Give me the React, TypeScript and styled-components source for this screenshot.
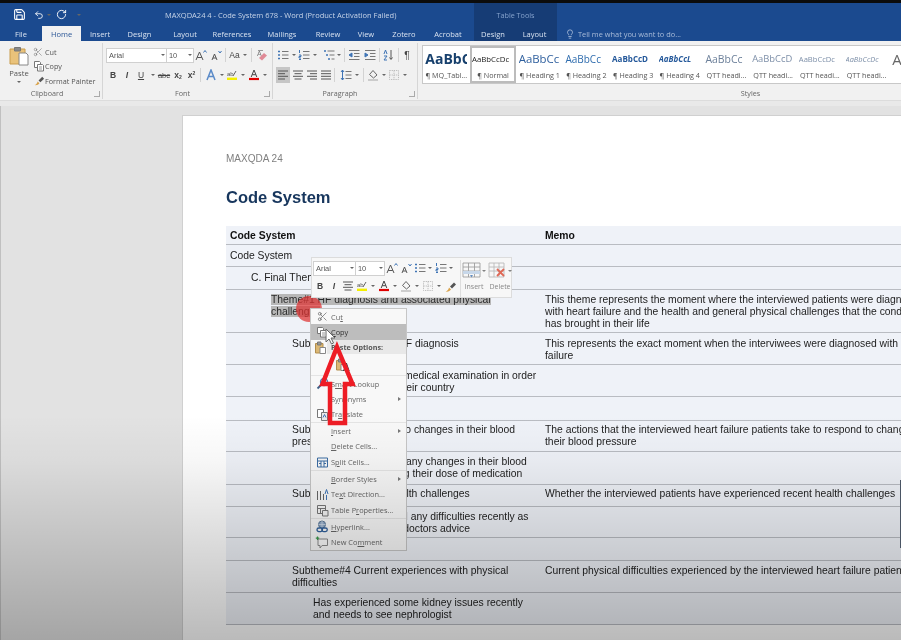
import React from "react";
import styled, { createGlobalStyle } from "styled-components";
import { Save, Undo2, RotateCw, Lightbulb, Scissors } from "lucide-react";

const Global = createGlobalStyle`
  html, body { margin: 0; padding: 0; background: #e2e2e2; }
  body { font-family: "Open Sans", "Liberation Sans", sans-serif; }
  svg { display: block; }
`;

const Screen = styled.div`
  position: relative; width: 901px; height: 640px; overflow: hidden;
  display: flex; flex-direction: column; background: #e2e2e2;
  filter: blur(0.3px);
`;
const TopEdge = styled.div`height: 3px; flex: none; background: #0c0c0c;`;

const Header = styled.header`
  flex: none; display: grid; grid-template-columns: 474px 83px 1fr; grid-template-rows: 23px 15px;
  background: #1b4a8f; color: #fff;
`;
const TitleCell = styled.div`display: flex; align-items: center; position: relative; padding-left: 13px;`;
const Qat = styled.div`display: flex; align-items: center; color: #fff; width: 152px; flex: none;`;
const QatSlot = styled.span<{ $w: number }>`width: ${p => p.$w}px; flex: none; display: flex; justify-content: flex-start; align-items: center;`;
const DocTitle = styled.div`font-size: 7.5px; color: #c7d4e8; white-space: nowrap;`;
const ContextTitle = styled.div`
  background: #163c75; color: #86a3cd; font-size: 7.2px; display: flex; align-items: center; justify-content: center;
`;
const Tabs = styled.nav`display: flex; align-items: stretch;`;
const Tab = styled.span<{ $w: number; $active?: boolean }>`
  width: ${p => p.$w}px; flex: none; display: flex; align-items: center; justify-content: center;
  font-size: 7.5px; white-space: nowrap;
  color: ${p => (p.$active ? "#2b5797" : "#d8e2f0")};
  background: ${p => (p.$active ? "#f1f1f1" : "transparent")};
`;
const ContextTabs = styled(Tabs)`background: #163c75;`;
const TellMe = styled.div`display: flex; align-items: center; gap: 3px; padding-left: 8px; font-size: 7.4px; color: #a9bcd9;`;

const Ribbon = styled.div`
  flex: none; height: 59px; display: flex; background: #f1f1f1; color: #555;
`;
const RibbonFoot = styled.div`flex: none; height: 5px; background: #e9e9e9; border-top: 1px solid #dcdcdc;`;
const Group = styled.section<{ $w?: number; $last?: boolean }>`
  position: relative; flex: ${p => (p.$w ? `none` : 1)}; ${p => (p.$w ? `width: ${p.$w}px;` : "min-width: 0;")}
  display: flex; flex-direction: column; border-right: ${p => (p.$last ? "0" : "1px solid #d6d6d6")}; box-sizing: border-box;
  margin-top: 2px; margin-bottom: 1px;
`;
const GroupBody = styled.div`flex: 1; min-height: 0;`;
const ClipBody = styled(GroupBody)`display: flex; padding: 2px 0 0 6px;`;
const ToolBody = styled(GroupBody)<{ $l: number }>`display: flex; flex-direction: column; gap: 4px; padding: 4px 0 0 ${p => p.$l}px;`;
const GroupLabel = styled.div<{ $pl?: number; $pr?: number }>`
  height: 12px; flex: none; display: flex; align-items: center; justify-content: center; font-size: 7.2px; color: #666;
  padding: 0 ${p => p.$pr ?? 0}px 0 ${p => p.$pl ?? 0}px;
`;
const Launcher = styled.span`position: absolute; right: 2px; bottom: 2px; width: 5px; height: 5px; border-left: 1px solid #aaa; border-bottom: 1px solid #aaa; transform: scaleX(-1);`;
const PasteCol = styled.div`width: 26px; flex: none; display: flex; flex-direction: column; align-items: center; font-size: 7.6px; color: #555;`;
const PasteLabel = styled.span`margin-top: 2px; line-height: 10px;`;
const PasteCaret = styled.span`
  height: 8px; display: flex; align-items: center;
  &::after { content: ""; border-left: 2px solid transparent; border-right: 2px solid transparent; border-top: 2px solid #666; }
`;
const ClipList = styled.div`display: flex; flex-direction: column; gap: 2px; margin-left: 1px; padding-top: 1px;`;
const ClipItem = styled.div`height: 13px; display: flex; align-items: center; font-size: 7.25px; color: #555; white-space: nowrap;`;
const ClipGlyph = styled.span`width: 12px; flex: none; display: flex; align-items: center;`;
const Row = styled.div`display: flex; align-items: center; height: 16px;`;
const Tool = styled.span<{ $w?: number; $on?: boolean; $b?: boolean; $i?: boolean; $u?: boolean; $fs?: number; $ml?: number }>`
  width: ${p => p.$w ?? 14}px; height: 16px; flex: none; display: flex; align-items: center; justify-content: center;
  font-family: "Liberation Sans", sans-serif; font-size: ${p => p.$fs ?? 8.5}px; color: #444;
  font-weight: ${p => (p.$b ? 700 : 400)}; font-style: ${p => (p.$i ? "italic" : "normal")};
  text-decoration: ${p => (p.$u ? "underline" : "none")};
  background: ${p => (p.$on ? "#c6c6c6" : "transparent")};
  margin-left: ${p => p.$ml ?? 0}px;
`;
const Script = styled.span<{ $up?: boolean }>`font-size: 5px; align-self: ${p => (p.$up ? "flex-start" : "flex-end")}; margin: 3px 0;`;
const Caret = styled.span<{ $w?: number; $h?: number }>`
  width: ${p => p.$w ?? 7}px; height: ${p => p.$h ?? 16}px; flex: none; display: flex; align-items: center; justify-content: center;
  &::after { content: ""; border-left: 2px solid transparent; border-right: 2px solid transparent; border-top: 2px solid #666; }
`;
const Sep = styled.span<{ $l?: number; $r?: number }>`
  width: 1px; height: 14px; flex: none; background: #d3d3d3; margin: 0 ${p => p.$r ?? 2}px 0 ${p => p.$l ?? 2}px;
`;
const Field = styled.span<{ $w: number }>`
  width: ${p => p.$w}px; height: 15px; box-sizing: border-box; flex: none; display: flex; align-items: center; justify-content: space-between;
  background: #fff; border: 1px solid #d0d0d0; margin-right: -1px; padding-left: 2px;
  font-family: "Liberation Sans", sans-serif; font-size: 7.4px; color: #555;
`;
const Gallery = styled.div`
  margin: 2px 0 0 4px; height: 39px; display: flex; background: #fff; overflow: hidden;
  border-top: 1px solid #c8c8c8; border-bottom: 1px solid #c8c8c8; border-left: 1px solid #c8c8c8; box-sizing: border-box;
`;
const Tile = styled.div<{ $on?: boolean }>`
  width: 46.7px; flex: none; box-sizing: border-box; display: flex; flex-direction: column; align-items: center; overflow: hidden;
  padding-top: ${p => (p.$on ? 3 : 5)}px; border: ${p => (p.$on ? "2px solid #bcbcbc" : "0")};
`;
const Sample = styled.div<{ $fs: number; $c: string; $b?: boolean; $i?: boolean }>`
  height: 15px; width: 42px; overflow: hidden; white-space: nowrap; display: flex; align-items: center;
  font-family: "Open Sans", sans-serif; font-size: ${p => p.$fs}px; color: ${p => p.$c};
  font-weight: ${p => (p.$b ? 700 : 400)}; font-style: ${p => (p.$i ? "italic" : "normal")};
`;
const TileName = styled.div`margin-top: 4px; font-size: 7.2px; color: #555; white-space: nowrap; width: 43px; text-align: center;`;

const Workspace = styled.main`flex: 1; min-height: 0; padding: 9px 0 0 181px; border-left: 1px solid #c0c0c0; overflow: hidden;`;
const Page = styled.article`
  width: 900px; height: 560px; box-sizing: border-box; background: #fff; border: 1px solid #d0d0d0; padding: 37px 0 0 43px;
`;
const Running = styled.div`font-family: "Liberation Sans", sans-serif; font-size: 10px; line-height: 12px; color: #808080;`;
const DocHeading = styled.h1`
  margin: 22px 0 0; font-family: "Liberation Sans", sans-serif; font-size: 16.5px; line-height: 20px; font-weight: 700; color: #17365d;
`;
const Table = styled.div`margin-top: 19px; width: 760px; font-family: "Liberation Sans", sans-serif; font-size: 10.35px; line-height: 12px; color: #222;`;
const TRow = styled.div<{ $h: number; $t: number }>`
  display: grid; grid-template-columns: 315px 1fr; height: ${p => p.$h}px; box-sizing: border-box; background: #eff2f8;
  border-bottom: 1px solid #b9bcc2; padding-top: ${p => p.$t}px;
`;
const HeadRow = styled(TRow)`font-weight: 700; color: #111;`;
const CodeCell = styled.div<{ $indent: number }>`padding-left: ${p => 4 + p.$indent}px; white-space: pre-line;`;
const MemoCell = styled.div`padding-left: 4px; white-space: pre-line;`;
const Selected = styled.span`background: #b7b7b7; color: #2a2a2a;`;

const Touch = styled.div`position: absolute; left: 296px; top: 296px; width: 26px; height: 26px; border-radius: 50%; background: rgba(222, 48, 48, 0.72);`;
const MiniBar = styled.div`
  position: absolute; left: 311px; top: 257px; width: 201px; height: 41px; box-sizing: border-box; background: #f7f7f7;
  border: 1px solid #dcdcdc; display: flex; padding: 2px 0 0 1px;
`;
const MiniMain = styled.div`display: flex; flex-direction: column; gap: 2px; width: 147px; flex: none; border-right: 1px solid #dedede;`;
const MiniRow = styled.div`display: flex; align-items: center; height: 16px;`;
const MiniAction = styled.div<{ $w: number }>`
  width: ${p => p.$w}px; flex: none; display: flex; flex-direction: column; align-items: center; font-size: 7px; color: #888; gap: 3px; padding-top: 2px;
`;
const MiniIcon = styled.div`display: flex; align-items: center; height: 17px; opacity: 0.8;`;

const Menu = styled.div`
  position: absolute; left: 310px; top: 308px; width: 97px; height: 243px; box-sizing: border-box; background: #f8f8f8;
  border: 1px solid #c6c6c6; display: flex; flex-direction: column;
`;
const MenuItem = styled.div<{ $h?: number; $on?: boolean; $sep?: boolean }>`
  height: ${p => p.$h ?? 16}px; flex: none; box-sizing: border-box; display: grid; grid-template-columns: 20px 1fr 8px; align-items: center;
  font-size: 7.4px; color: ${p => (p.$on ? "#333" : "#666")}; white-space: nowrap;
  background: ${p => (p.$on ? "#bdbdbd" : "transparent")};
  ${p => (p.$sep ? "border-top: 1px solid #e4e4e4;" : "")}
`;
const MenuHead = styled.div`
  height: 14px; flex: none; display: grid; grid-template-columns: 16px 1fr; align-items: center;
  font-size: 7.2px; font-weight: 700; color: #555;
`;
const MenuHeadText = styled.span`height: 100%; display: flex; align-items: center; padding-left: 4px; background: #e8e8e8;`;
const MenuGlyph = styled.span`display: flex; justify-content: center; padding-left: 2px;`;
const Sub = styled.span`
  width: 0; height: 0; border-left: 3px solid #777; border-top: 2px solid transparent; border-bottom: 2px solid transparent;
`;
const PasteRow = styled.div`height: 21px; flex: none; padding-left: 24px; display: flex; align-items: center; gap: 0;`;
const PasteA = styled.span`font-family: "Liberation Sans", sans-serif; font-size: 10px; color: #333; margin: 6px 0 0 -5px;`;
const Pointer = styled.svg`position: absolute; left: 325px; top: 328px;`;
const Arrow = styled.svg`position: absolute; left: 315px; top: 340px;`;
const Shade = styled.div`
  position: absolute; left: 0; right: 0; top: 415px; bottom: 0; pointer-events: none;
  background: linear-gradient(to bottom, rgba(0,0,0,0) 0%, rgba(0,0,0,0.03) 20%, rgba(0,0,0,0.27) 100%);
`;
const ScrollThumb = styled.div`position: absolute; right: 0; top: 480px; width: 1px; height: 68px; background: #4a5564;`;

const P = (p: { s?: number; children: React.ReactNode; w?: number; h?: number }) => (
  <svg width={p.w ?? p.s ?? 12} height={p.h ?? p.s ?? 12} viewBox={`0 0 ${p.w ?? p.s ?? 12} ${p.h ?? p.s ?? 12}`} fill="none" stroke="#777" strokeWidth="1">
    {p.children}
  </svg>
);

const Bullets = () => (
  <P>
    <path d="M1 2.500h2M1 6h2M1 9.500h2" stroke="#3f74b5" strokeWidth="1.600" />
    <path d="M5 2.500h6.500M5 6h6.500M5 9.500h6.500" />
  </P>
);
const Numbers = () => (
  <P>
    <path d="M1.500 1v3M1 6h2v1.500H1V9h2M1 10.500h2" stroke="#3f74b5" />
    <path d="M5 2.500h6.500M5 6h6.500M5 9.500h6.500" />
  </P>
);
const MultiList = () => (
  <P>
    <path d="M1 2h2M3 6h2M5 10h2" stroke="#3f74b5" strokeWidth="1.400" />
    <path d="M4.500 2h7M6.500 6h5M8.500 10h3" />
  </P>
);
const Indent = ({ right }: { right?: boolean }) => (
  <P>
    <path d="M1 1.500h10.500M6 4.500h5.500M6 7.500h5.500M1 10.500h10.500" />
    <path d={right ? "M1 4l3 2-3 2z" : "M4 4L1 6l3 2z"} fill="#3f74b5" stroke="#3f74b5" />
  </P>
);
const Sort = () => (
  <P>
    <path d="M9 1v9M7.500 8.500L9 10.500l1.500-2" stroke="#555" />
    <path d="M2 5l1.500-4L5 5M2 7h3L2 11h3" stroke="#3f74b5" />
  </P>
);
const Align = ({ kind }: { kind: "l" | "c" | "r" | "j" }) => {
  const d = {
    l: "M1 2h10M1 4.700h7M1 7.300h10M1 10h7",
    c: "M1 2h10M2.500 4.700h7M1 7.300h10M2.500 10h7",
    r: "M1 2h10M4 4.700h7M1 7.300h10M4 10h7",
    j: "M1 2h10M1 4.700h10M1 7.300h10M1 10h10",
  }[kind];
  return <P><path d={d} stroke="#555" /></P>;
};
const Spacing = () => (
  <P>
    <path d="M2.500 1v10M1 3l1.500-2L4 3M1 9l1.500 2L4 9" stroke="#3f74b5" />
    <path d="M5.500 2.500h6M5.500 6h6M5.500 9.500h6" />
  </P>
);
const Bucket = () => (
  <P>
    <path d="M6 1.500L10 6l-3.500 3L2.500 5.500z" stroke="#666" />
    <path d="M1 11h10" stroke="#bbb" strokeWidth="1.400" />
  </P>
);
const Borders = () => (
  <P>
    <path d="M1.500 1.500h9v9h-9zM6 1.500v9M1.500 6h9" stroke="#bbb" strokeDasharray="1.200 1" />
  </P>
);
const Highlight = () => (
  <svg width="12" height="12" viewBox="0 0 12 12" fill="none">
    <text x="1" y="6.500" fontSize="6" fontFamily="Liberation Sans" fill="#555">ab</text>
    <path d="M7 7l3-5" stroke="#666" />
    <path d="M1 9.800h10" stroke="#f5f000" strokeWidth="2.400" />
  </svg>
);
const FontColor = () => (
  <svg width="12" height="12" viewBox="0 0 12 12" fill="none">
    <path d="M3.200 8L6 1l2.800 7M4.200 5.700h3.600" stroke="#444" strokeWidth="1" />
    <path d="M1 10h10" stroke="#e00000" strokeWidth="2.200" />
  </svg>
);
const TextFx = () => (
  <svg width="12" height="12" viewBox="0 0 12 12" fill="none">
    <path d="M2 11L6 1l4 10M3.500 7.500h5" stroke="#5a8ac8" strokeWidth="1.500" />
  </svg>
);
const Grow = ({ up }: { up?: boolean }) => (
  <svg width="12" height="12" viewBox="0 0 12 12" fill="none">
    <path d={up ? "M1 11L4.500 3 8 11M2.200 8.500h4.600" : "M2 11L4.500 5 7 11M3 9h3"} stroke="#555" strokeWidth="1" />
    <path d={up ? "M8.500 3.500L10 1.500l1.500 2" : "M8.500 2l1.500 2 1.500-2"} stroke="#3f74b5" strokeWidth="1" />
  </svg>
);
const EraserIcon = () => (
  <svg width="13" height="13" viewBox="0 0 13 13" fill="none">
    <path d="M3 1.500h5" stroke="#999" />
    <text x="2" y="7" fontSize="7" fontFamily="Liberation Sans" fill="#777">A</text>
    <path d="M4 9l5-5 3 2.500-5 5z" fill="#e08a96" />
  </svg>
);
const Painter = () => (
  <svg width="13" height="13" viewBox="0 0 13 13" fill="none">
    <path d="M1.500 11.500c2-.5 3-2 3.500-4l2 2c-1 1.500-3 2.500-5.500 2z" fill="#d9a24a" />
    <path d="M6 6.500l4-4 2 2-4 4z" fill="#555" />
  </svg>
);
const PasteBig = () => (
  <svg width="20" height="21" viewBox="0 0 20 21" fill="none">
    <path d="M1 4h15v15H1z" fill="#e9c27a" stroke="#c99c4c" />
    <path d="M5.500 2.500h6V6h-6z" fill="#8a8a8a" stroke="#777" />
    <path d="M10 8h7l2 2v10h-9z" fill="#fff" stroke="#888" />
  </svg>
);
const CopyIcon = () => (
  <P>
    <path d="M1.500 1.500h5l1 1v5h-6z" fill="#fff" />
    <path d="M4.500 4.500h5l1 1v5.500h-6z" fill="#fff" />
    <path d="M6 7h3M6 9h3" stroke="#999" />
  </P>
);
const ClipIcon = () => (
  <P s={13}>
    <path d="M1.500 2.500h7.500v9.500H1.500z" fill="#dcb874" stroke="#b28d4b" />
    <path d="M3.500 1h3.500v3H3.500z" fill="#999" stroke="#777" />
    <path d="M6 6.500h5.500V12.500H6z" fill="#fff" stroke="#888" />
  </P>
);
const SearchIcon = () => (
  <P s={13}>
    <circle cx="8" cy="5" r="3.500" stroke="#4a7fb8" strokeWidth="1.300" />
    <path d="M5.500 7.500L1.500 11.500" stroke="#3c5f87" strokeWidth="1.800" />
  </P>
);
const TranslateIcon = () => (
  <P s={13}>
    <path d="M1.500 1.500h6v8h-6z" fill="#fff" />
    <path d="M5.500 4.500h6v8h-6z" fill="#e9e9e9" />
    <path d="M7 9.500l1.500-3 1.500 3" stroke="#3f74b5" />
  </P>
);
const SplitIcon = () => (
  <P s={13}>
    <path d="M1.500 2h10v9h-10zM1.500 5h10M5 5v6M8 5v6" stroke="#3b6ca3" />
    <path d="M3 7.500h2M8 7.500h2" stroke="#3b6ca3" />
  </P>
);
const DirectionIcon = () => (
  <svg width="13" height="13" viewBox="0 0 13 13" fill="none">
    <path d="M1.500 3v9M4.500 3v9M7.500 6v6" stroke="#666" />
    <path d="M9 6l1.500-4.500L12 6" stroke="#3f74b5" />
    <path d="M10.500 7v5" stroke="#3f74b5" />
  </svg>
);
const PropsIcon = () => (
  <P s={13}>
    <path d="M1.500 1.500h8v8h-8zM1.500 4.500h8M4.500 4.500v5" />
    <path d="M6.500 6.500h5.500v5.500H6.500z" fill="#f4f4f4" />
  </P>
);
const LinkIcon = () => (
  <svg width="13" height="13" viewBox="0 0 13 13" fill="none">
    <circle cx="6" cy="4.500" r="3.500" fill="#8fa9c7" stroke="#5b7796" />
    <path d="M2.500 4.500h7M6 1v7" stroke="#d5e0ec" strokeWidth=".7" />
    <rect x="1" y="8" width="5.500" height="3.600" rx="1.800" stroke="#2f5f9a" strokeWidth="1.300" />
    <rect x="5.800" y="8" width="5.500" height="3.600" rx="1.800" stroke="#2f5f9a" strokeWidth="1.300" />
  </svg>
);
const CommentIcon = () => (
  <svg width="14" height="13" viewBox="0 0 14 13" fill="none">
    <path d="M3 3h9.500v6.500H7l-2 2.500V9.500H3z" fill="#fbfbfb" stroke="#8a8a8a" />
    <path d="M2.500 .5v3.500M.8 2.200h3.400" stroke="#3c9a4c" strokeWidth="1.200" />
  </svg>
);
const InsertTable = () => (
  <svg width="20" height="17" viewBox="0 0 20 17" fill="none">
    <path d="M1 1h17v14H1zM1 5h17M1 9h17M6.500 1v14M12.500 1v14" stroke="#888" strokeWidth=".9" />
    <path d="M1 9h17v3H1z" fill="#bcd0e6" />
    <path d="M8 13l1.500 2.500L11 13z" fill="#3f74b5" />
  </svg>
);
const DeleteTable = () => (
  <svg width="20" height="17" viewBox="0 0 20 17" fill="none">
    <path d="M1 1h15v14H1zM1 5h15M1 9h15M6 1v14M11 1v14" stroke="#aaa" strokeWidth=".9" />
    <path d="M9 7l7 7M16 7l-7 7" stroke="#d9462f" strokeWidth="1.800" />
  </svg>
);

const styles: { t: string; n: string; fs: number; c: string; b?: boolean; i?: boolean; on?: boolean }[] = [
  { t: "AaBbC", n: "¶ MQ_Tabl...", fs: 14, c: "#17406d", b: true },
  { t: "AaBbCcDc", n: "¶ Normal", fs: 7.8, c: "#222", on: true },
  { t: "AaBbCc", n: "¶ Heading 1", fs: 11.4, c: "#2e5f9e" },
  { t: "AaBbCc", n: "¶ Heading 2", fs: 10, c: "#2e6cae" },
  { t: "AaBbCcD", n: "¶ Heading 3", fs: 8, c: "#24589a", b: true },
  { t: "AaBbCcL", n: "¶ Heading 4", fs: 8, c: "#24589a", b: true, i: true },
  { t: "AaBbCc", n: "QTT headi...", fs: 10.4, c: "#6b7f99" },
  { t: "AaBbCcD", n: "QTT headi...", fs: 9.4, c: "#7d8fa8" },
  { t: "AaBbCcDc", n: "QTT headi...", fs: 7.6, c: "#7d8fa8" },
  { t: "AaBbCcDc", n: "QTT headi...", fs: 7.4, c: "#7d8fa8", i: true },
  { t: "A", n: "", fs: 15, c: "#666" },
];

type R = { h: number; t: number; indent?: number; code?: React.ReactNode; memo?: string };
const rows: R[] = [
  { h: 22, t: 5, indent: 0, code: "Code System" },
  { h: 23, t: 5, indent: 21, code: "C. Final Themes" },
  {
    h: 43, t: 4, indent: 41,
    code: <><Selected>Theme#1 HF diagnosis and associated physical</Selected>{"\n"}<Selected>challenges</Selected></>,
    memo: "This theme represents the moment where the interviewed patients were diagnosed\nwith heart failure and the health and general physical challenges that the condition\nhas brought in their life",
  },
  { h: 32, t: 5, indent: 62, code: "Subtheme#1 Getting a HF diagnosis", memo: "This represents the exact moment when the interviwees were diagnosed with heart\nfailure" },
  { h: 32, t: 5, indent: 83, code: "Was taken for a full medical examination in order\nto be examined in their country" },
  { h: 24, t: 4 },
  { h: 31, t: 3, indent: 62, code: "Subtheme#2 Reactions to changes in their blood\npressure", memo: "The actions that the interviewed heart failure patients take to respond to changes in\ntheir blood pressure" },
  { h: 33, t: 4, indent: 83, code: "Has not undergone\u2009 any changes in their blood\npressure, decreasing their dose of medication" },
  { h: 22, t: 3, indent: 62, code: "Subtheme#3 Recent health challenges", memo: "Whether the interviewed patients have experienced recent health challenges" },
  { h: 31, t: 4, indent: 83, code: "Has not experienced any difficulties recently as\nsince they followed doctors advice" },
  { h: 23, t: 4 },
  { h: 32, t: 4, indent: 62, code: "Subtheme#4 Current experiences with physical\ndifficulties", memo: "Current physical difficulties experienced by the interviewed heart failure patients" },
  { h: 32, t: 4, indent: 83, code: "Has experienced some kidney issues recently\nand needs to see nephrologist" },
];

export default function App() {
  return (
    <Screen>
      <Global />
      <TopEdge />
      <Header>
        <TitleCell>
          <Qat>
            <QatSlot $w={21}><Save size={13} strokeWidth={2} /></QatSlot>
            <QatSlot $w={10}><Undo2 size={12} strokeWidth={2} /></QatSlot>
            <Caret $w={9} />
            <QatSlot $w={3} />
            <QatSlot $w={20}><RotateCw size={11} strokeWidth={2} /></QatSlot>
            <Caret $w={6} />
          </Qat>
          <DocTitle>MAXQDA24 4 - Code System 678 - Word (Product Activation Failed)</DocTitle>
        </TitleCell>
        <ContextTitle>Table Tools</ContextTitle>
        <div />
        <Tabs>
          <Tab $w={42}>File</Tab>
          <Tab $w={39} $active>Home</Tab>
          <Tab $w={38}>Insert</Tab>
          <Tab $w={41}>Design</Tab>
          <Tab $w={50}>Layout</Tab>
          <Tab $w={44}>References</Tab>
          <Tab $w={56}>Mailings</Tab>
          <Tab $w={36}>Review</Tab>
          <Tab $w={40}>View</Tab>
          <Tab $w={36}>Zotero</Tab>
          <Tab $w={52}>Acrobat</Tab>
        </Tabs>
        <ContextTabs>
          <Tab $w={38}>Design</Tab>
          <Tab $w={45}>Layout</Tab>
        </ContextTabs>
        <TellMe>
          <Lightbulb size={10} strokeWidth={1.5} color="#d8e2f0" />
          Tell me what you want to do...
        </TellMe>
      </Header>
      <Ribbon>
        <Group $w={103}>
          <ClipBody>
            <PasteCol>
              <PasteBig />
              <PasteLabel>Paste</PasteLabel>
              <PasteCaret />
            </PasteCol>
            <ClipList>
              <ClipItem><ClipGlyph><Scissors size={10} color="#666" strokeWidth={1.2} /></ClipGlyph>Cut</ClipItem>
              <ClipItem><ClipGlyph><CopyIcon /></ClipGlyph>Copy</ClipItem>
              <ClipItem><ClipGlyph><Painter /></ClipGlyph>Format Painter</ClipItem>
            </ClipList>
          </ClipBody>
          <GroupLabel $pr={8}>Clipboard</GroupLabel>
          <Launcher />
        </Group>
        <Group $w={170}>
          <ToolBody $l={3}>
            <Row>
              <Field $w={61}>Arial<Caret /></Field>
              <Field $w={28}>10<Caret /></Field>
              <Tool $w={15}><Grow up /></Tool>
              <Tool $w={15}><Grow /></Tool>
              <Sep $l={2} $r={2} />
              <Tool $w={13} $fs={8.5}>Aa</Tool>
              <Caret />
              <Sep $l={3} $r={2} />
              <Tool $w={14}><EraserIcon /></Tool>
            </Row>
            <Row>
              <Tool $b>B</Tool>
              <Tool $i $b>I</Tool>
              <Tool $u>U</Tool>
              <Caret $w={9} />
              <Tool $fs={7.6}><s>abc</s></Tool>
              <Tool $b>x<Script>2</Script></Tool>
              <Tool $w={13} $b>x<Script $up>2</Script></Tool>
              <Sep $l={2} $r={3} />
              <Tool><TextFx /></Tool>
              <Caret $w={7} />
              <Tool><Highlight /></Tool>
              <Caret $w={8} />
              <Tool><FontColor /></Tool>
              <Caret $w={8} />
            </Row>
          </ToolBody>
          <GroupLabel $pr={10}>Font</GroupLabel>
          <Launcher />
        </Group>
        <Group $w={145}>
          <ToolBody $l={3}>
            <Row>
              <Tool><Bullets /></Tool>
              <Caret $w={7} />
              <Tool><Numbers /></Tool>
              <Caret $w={7} />
              <Tool $ml={4}><MultiList /></Tool>
              <Caret $w={6} />
              <Sep $l={2} $r={2} />
              <Tool><Indent /></Tool>
              <Tool $ml={2}><Indent right /></Tool>
              <Sep $l={2} $r={1} />
              <Tool><Sort /></Tool>
              <Sep $l={3} $r={1} />
              <Tool $fs={10}>¶</Tool>
            </Row>
            <Row>
              <Tool $on><Align kind="l" /></Tool>
              <Tool $ml={1}><Align kind="c" /></Tool>
              <Tool><Align kind="r" /></Tool>
              <Tool><Align kind="j" /></Tool>
              <Sep $l={1} $r={4} />
              <Tool><Spacing /></Tool>
              <Caret $w={7} />
              <Sep $l={3} $r={2} />
              <Tool><Bucket /></Tool>
              <Caret $w={7} />
              <Tool><Borders /></Tool>
              <Caret $w={8} />
            </Row>
          </ToolBody>
          <GroupLabel $pr={10}>Paragraph</GroupLabel>
          <Launcher />
        </Group>
        <Group $last>
          <GroupBody>
            <Gallery>
              {styles.map((s, i) => (
                <Tile key={i} $on={s.on}>
                  <Sample $fs={s.fs} $c={s.c} $b={s.b} $i={s.i}>{s.t}</Sample>
                  <TileName>{s.n}</TileName>
                </Tile>
              ))}
            </Gallery>
          </GroupBody>
          <GroupLabel $pl={182}>Styles</GroupLabel>
        </Group>
      </Ribbon>
      <RibbonFoot />
      <Workspace>
        <Page>
          <Running>MAXQDA 24</Running>
          <DocHeading>Code System</DocHeading>
          <Table>
            <HeadRow $h={19} $t={4}>
              <CodeCell $indent={0}>Code System</CodeCell>
              <MemoCell>Memo</MemoCell>
            </HeadRow>
            {rows.map((r, i) => (
              <TRow key={i} $h={r.h} $t={r.t}>
                <CodeCell $indent={r.indent ?? 0}>{r.code}</CodeCell>
                <MemoCell>{r.memo}</MemoCell>
              </TRow>
            ))}
          </Table>
        </Page>
      </Workspace>
      <Touch />
      <MiniBar>
        <MiniMain>
          <MiniRow>
            <Field $w={43}>Arial<Caret /></Field>
            <Field $w={30}>10<Caret /></Field>
            <Tool $w={15}><Grow up /></Tool>
            <Tool $w={14}><Grow /></Tool>
            <Tool $w={13}><Bullets /></Tool>
            <Caret $w={8} />
            <Tool $w={13}><Numbers /></Tool>
            <Caret $w={7} />
          </MiniRow>
          <MiniRow>
            <Tool $b>B</Tool>
            <Tool $i $b>I</Tool>
            <Tool><Align kind="c" /></Tool>
            <Tool><Highlight /></Tool>
            <Caret $w={8} />
            <Tool><FontColor /></Tool>
            <Caret $w={8} />
            <Tool><Bucket /></Tool>
            <Caret $w={8} />
            <Tool><Borders /></Tool>
            <Caret $w={8} />
            <Tool><Painter /></Tool>
          </MiniRow>
        </MiniMain>
        <MiniAction $w={26}>
          <MiniIcon><InsertTable /><Caret $w={5} $h={10} /></MiniIcon>
          <span>Insert</span>
        </MiniAction>
        <MiniAction $w={26}>
          <MiniIcon><DeleteTable /><Caret $w={4} $h={10} /></MiniIcon>
          <span>Delete</span>
        </MiniAction>
      </MiniBar>
      <Menu>
        <MenuItem $h={15}><MenuGlyph><Scissors size={11} color="#555" strokeWidth={1.4} /></MenuGlyph><span>Cu<u>t</u></span></MenuItem>
        <MenuItem $on><MenuGlyph><CopyIcon /></MenuGlyph><span><u>C</u>opy</span></MenuItem>
        <MenuHead><MenuGlyph><ClipIcon /></MenuGlyph><MenuHeadText>Paste Options:</MenuHeadText></MenuHead>
        <PasteRow><ClipIcon /><PasteA>A</PasteA></PasteRow>
        <MenuItem $sep><MenuGlyph><SearchIcon /></MenuGlyph><span>S<u>m</u>art Lookup</span></MenuItem>
        <MenuItem $h={15}><span /><span>S<u>y</u>nonyms</span><Sub /></MenuItem>
        <MenuItem><MenuGlyph><TranslateIcon /></MenuGlyph><span>Tr<u>a</u>nslate</span></MenuItem>
        <MenuItem $sep><span /><span><u>I</u>nsert</span><Sub /></MenuItem>
        <MenuItem><span /><span><u>D</u>elete Cells...</span></MenuItem>
        <MenuItem><MenuGlyph><SplitIcon /></MenuGlyph><span>S<u>p</u>lit Cells...</span></MenuItem>
        <MenuItem $sep><span /><span><u>B</u>order Styles</span><Sub /></MenuItem>
        <MenuItem><MenuGlyph><DirectionIcon /></MenuGlyph><span>Te<u>x</u>t Direction...</span></MenuItem>
        <MenuItem><MenuGlyph><PropsIcon /></MenuGlyph><span>Table P<u>r</u>operties...</span></MenuItem>
        <MenuItem $sep><MenuGlyph><LinkIcon /></MenuGlyph><span><u>H</u>yperlink...</span></MenuItem>
        <MenuItem><MenuGlyph><CommentIcon /></MenuGlyph><span>New Co<u>m</u>ment</span></MenuItem>
      </Menu>
      <Pointer width="12" height="18" viewBox="0 0 12 18">
        <path d="M1 1v13l3-3 2.500 5 2-1-2.500-5h4z" fill="#fff" stroke="#666" />
      </Pointer>
      <Arrow width="46" height="90" viewBox="0 0 46 90">
        <path d="M22 7L37.500 44H30V83H15V44H7.500Z" fill="none" stroke="#ee1c25" strokeWidth="4.500" />
      </Arrow>
      <Shade />
      <ScrollThumb />
    </Screen>
  );
}
